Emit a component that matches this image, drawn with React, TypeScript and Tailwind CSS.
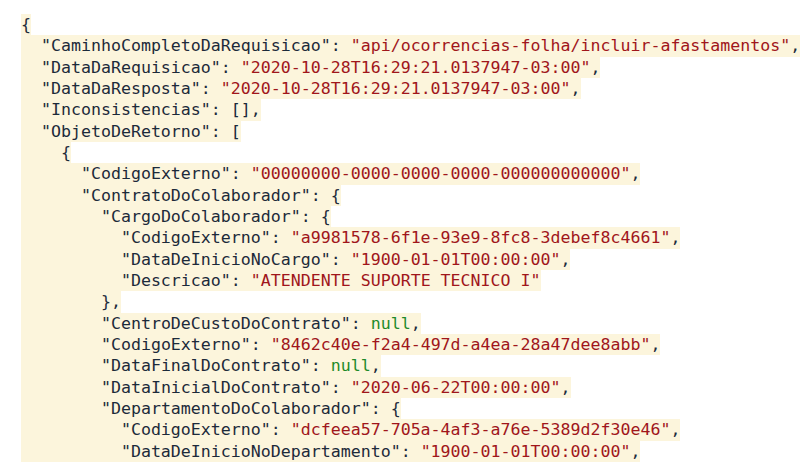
// Trecho de JSON com destaque de sintaxe, linha a linha
type Token = { t: string; c?: "k" | "s" | "n" };

const cores = {
  k: "text-[#1c2a3a]",
  s: "text-[#a0161b]",
  n: "text-[#1e8a2a]",
};

// monta uma linha "chave": valor
const par = (indent: number, chave: string, valor: Token[], fim = ""): Token[] => [
  { t: " ".repeat(indent) },
  { t: `"${chave}"`, c: "k" },
  { t: ": " },
  ...valor,
  { t: fim },
];

const str = (v: string): Token[] => [{ t: `"${v}"`, c: "s" }];

const linhas: Token[][] = [
  [{ t: "{" }],
  par(2, "CaminhoCompletoDaRequisicao", str("api/ocorrencias-folha/incluir-afastamentos"), ","),
  par(2, "DataDaRequisicao", str("2020-10-28T16:29:21.0137947-03:00"), ","),
  par(2, "DataDaResposta", str("2020-10-28T16:29:21.0137947-03:00"), ","),
  par(2, "Inconsistencias", [{ t: "[]" }], ","),
  par(2, "ObjetoDeRetorno", [{ t: "[" }]),
  [{ t: "    {" }],
  par(6, "CodigoExterno", str("00000000-0000-0000-0000-000000000000"), ","),
  par(6, "ContratoDoColaborador", [{ t: "{" }]),
  par(8, "CargoDoColaborador", [{ t: "{" }]),
  par(10, "CodigoExterno", str("a9981578-6f1e-93e9-8fc8-3debef8c4661"), ","),
  par(10, "DataDeInicioNoCargo", str("1900-01-01T00:00:00"), ","),
  par(10, "Descricao", str("ATENDENTE SUPORTE TECNICO I")),
  [{ t: "        }," }],
  par(8, "CentroDeCustoDoContrato", [{ t: "null", c: "n" }], ","),
  par(8, "CodigoExterno", str("8462c40e-f2a4-497d-a4ea-28a47dee8abb"), ","),
  par(8, "DataFinalDoContrato", [{ t: "null", c: "n" }], ","),
  par(8, "DataInicialDoContrato", str("2020-06-22T00:00:00"), ","),
  par(8, "DepartamentoDoColaborador", [{ t: "{" }]),
  par(10, "CodigoExterno", str("dcfeea57-705a-4af3-a76e-5389d2f30e46"), ","),
  par(10, "DataDeInicioNoDepartamento", str("1900-01-01T00:00:00"), ","),
];

export default function App() {
  return (
    <div className="w-[811px] h-[469px] overflow-hidden bg-white pt-[14px] pl-[21px] font-['DejaVu_Sans_Mono',monospace] text-[16.6px] leading-[21.33px] text-[#1c2a3a]">
      {linhas.map((linha, i) => (
        <div key={i} className="w-fit whitespace-pre bg-[#fcf5dc]">
          {linha.map((tk, j) => (
            <span key={j} className={tk.c ? cores[tk.c] : undefined}>
              {tk.t}
            </span>
          ))}
        </div>
      ))}
    </div>
  );
}
